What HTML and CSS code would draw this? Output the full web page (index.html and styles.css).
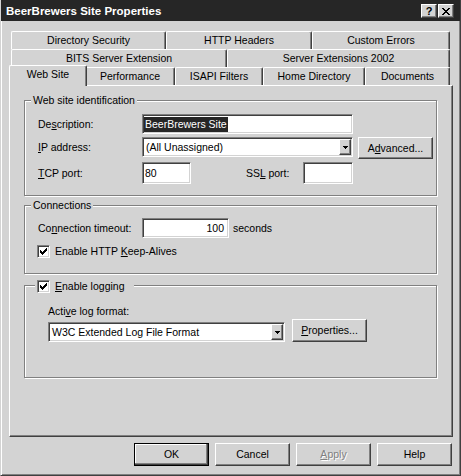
FILE: index.html
```html
<!DOCTYPE html>
<html>
<head>
<meta charset="utf-8">
<title>BeerBrewers Site Properties</title>
<link rel="stylesheet" href="styles.css">
</head>
<body>
<div class="window">
  <div class="titlebar">
    <span class="title">BeerBrewers Site Properties</span>
    <div class="capbtns">
      <span class="cbtn help">?</span>
      <span class="cbtn"><svg width="8" height="7" viewBox="0 0 8 7" shape-rendering="crispEdges"><path d="M0 0h2v1h-2z M6 0h2v1h-2z M1 1h2v1h-2z M5 1h2v1h-2z M2 2h4v1h-4z M3 3h2v1h-2z M2 4h4v1h-4z M1 5h2v1h-2z M5 5h2v1h-2z M0 6h2v1h-2z M6 6h2v1h-2z" fill="#000"/></svg></span>
    </div>
  </div>
  <div class="body">
    <div class="tabs">
      <div class="tabrow">
        <div class="tab w-ds">Directory Security</div>
        <div class="tab w-hh">HTTP Headers</div>
        <div class="tab w-ce">Custom Errors</div>
      </div>
      <div class="tabrow">
        <div class="tab w-bits">BITS Server Extension</div>
        <div class="tab w-se">Server Extensions 2002</div>
      </div>
      <div class="tabrow">
        <div class="tab sel w-ws">Web Site</div>
        <div class="tab w-pf">Performance</div>
        <div class="tab w-is">ISAPI Filters</div>
        <div class="tab w-hd">Home Directory</div>
        <div class="tab w-doc">Documents</div>
      </div>
    </div>
    <div class="page">
      <div class="group g1">
        <div class="gtitle">Web site identification</div>
        <div class="row r1">
          <span class="lbl">De<u>s</u>cription:</span>
          <div class="edit desc"><span class="hl">BeerBrewers Site</span></div>
        </div>
        <div class="row r2">
          <span class="lbl">
            <u>I</u>P address:</span>
          <div class="combo ipc">
            <span class="ctext">(All Unassigned)</span>
            <span class="arrow"><svg width="5" height="3" viewBox="0 0 5 3" shape-rendering="crispEdges"><path d="M0 0h5v1h-5z M1 1h3v1h-3z M2 2h1v1h-1z" fill="#000"/></svg></span>
          </div>
          <div class="btn adv">A<u>d</u>vanced...</div>
        </div>
        <div class="row r3">
          <span class="lbl"><u>T</u>CP port:</span>
          <div class="edit tcp">80</div>
          <span class="ssl">SS<u>L</u> port:</span>
          <div class="edit sslbox"></div>
        </div>
      </div>
      <div class="group g2">
        <div class="gtitle">Connections</div>
        <div class="row r4">
          <span class="lbl">Co<u>n</u>nection timeout:</span>
          <div class="edit num">100</div>
          <span class="sec">seconds</span>
        </div>
        <div class="row r5">
          <span class="chk"><svg width="7" height="7" viewBox="0 0 7 7" shape-rendering="crispEdges"><path d="M0 2h1v3h-1z M1 3h1v3h-1z M2 4h1v3h-1z M3 3h1v3h-1z M4 2h1v3h-1z M5 1h1v3h-1z M6 0h1v3h-1z" fill="#000"/></svg></span>
          <span class="chklbl">Enable HTTP <u>K</u>eep-Alives</span>
        </div>
      </div>
      <div class="group g3">
        <div class="gtitle">
          <span class="chk"><svg width="7" height="7" viewBox="0 0 7 7" shape-rendering="crispEdges"><path d="M0 2h1v3h-1z M1 3h1v3h-1z M2 4h1v3h-1z M3 3h1v3h-1z M4 2h1v3h-1z M5 1h1v3h-1z M6 0h1v3h-1z" fill="#000"/></svg></span>
          <span class="chklbl"><u>E</u>nable logging</span>
        </div>
        <div class="fmtlbl">Acti<u>v</u>e log format:</div>
        <div class="row r6">
          <div class="combo fmt">
            <span class="ctext">W3C Extended Log File Format</span>
            <span class="arrow"><svg width="5" height="3" viewBox="0 0 5 3" shape-rendering="crispEdges"><path d="M0 0h5v1h-5z M1 1h3v1h-3z M2 2h1v1h-1z" fill="#000"/></svg></span>
          </div>
          <div class="btn props"><u>P</u>roperties...</div>
        </div>
      </div>
    </div>
    <div class="btnrow">
      <div class="btn def">OK</div>
      <div class="btn">Cancel</div>
      <div class="btn dis"><u>A</u>pply</div>
      <div class="btn">Help</div>
    </div>
  </div>
</div>
</body>
</html>
```

FILE: styles.css
```css
* { box-sizing: border-box; }

body {
  margin: 0;
  background: #d3d3d3;
  font-family: "Liberation Sans", Arial, sans-serif;
  font-size: 10.5px;
  line-height: 13px;
  color: #000;
}

.window {
  width: 461px;
  height: 476px;
  background: #d3d3d3;
  border-left: 1px solid #d3d3d3;
  border-right: 1px solid #404040;
  border-bottom: 1px solid #404040;
  box-shadow: inset 1px 0 #fff, inset -1px -1px #808080;
  padding: 0 2px 2px 2px;
  overflow: hidden;
}

.titlebar {
  height: 21px;
  margin: 0 -2px;
  background: #262626;
  display: flex;
  align-items: center;
  justify-content: space-between;
  padding: 0 6px 0 5px;
}

.title {
  color: #fff;
  font-weight: bold;
  font-size: 11.5px;
  line-height: 14px;
  white-space: nowrap;
}

.capbtns {
  display: flex;
  gap: 1px;
  padding-top: 1px;
}

.cbtn {
  width: 16px;
  height: 14px;
  background: #d3d3d3;
  border: 1px solid;
  border-color: #fff #404040 #404040 #fff;
  box-shadow: inset -1px -1px #808080;
  display: flex;
  align-items: center;
  justify-content: center;
}

.cbtn.help {
  font-weight: bold;
  font-size: 11px;
  line-height: 11px;
}

.body {
  padding: 10px 5px 0 6px;
}

/* tabs */
.tabs {
  margin: 0 3px 0 2px;
}

.tabrow {
  display: flex;
  height: 18px;
}

.tab {
  height: 18px;
  flex: none;
  background: #d3d3d3;
  border-top: 1px solid #fff;
  border-left: 1px solid #fff;
  border-right: 1px solid #404040;
  box-shadow: inset -1px 0 #808080;
  border-radius: 2px 2px 0 0;
  text-align: center;
  padding-top: 2px;
  white-space: nowrap;
}

.tab.sel {
  height: 21px;
  margin: -2px -2px 0 -2px;
  position: relative;
  z-index: 1;
}

.w-ds { width: 155px; }
.w-hh { width: 146px; }
.w-ce { width: 138px; }
.w-bits { width: 216px; }
.w-se { width: 223px; }
.w-ws { width: 78px; }
.w-pf { width: 90px; }
.w-is { width: 88px; }
.w-hd { width: 102px; }
.w-doc { width: 85px; }

/* page */
.page {
  height: 352px;
  border: 1px solid;
  border-color: #fff #404040 #404040 #fff;
  box-shadow: inset -1px -1px #808080;
  padding: 14px 15px 0 14px;
}

.group {
  border: 1px solid #808080;
  box-shadow: inset 1px 1px #fff, 1px 1px #fff;
  padding: 0 0 0 13px;
}

.g1 { padding-bottom: 11px; }
.g2 { margin-top: 9px; padding-bottom: 15px; }
.g3 { margin-top: 11px; padding-bottom: 35px; }

.gtitle {
  display: flex;
  align-items: center;
  width: fit-content;
  height: 13px;
  margin: -7px 0 0 -7px;
  padding: 0 2px;
  background: #d3d3d3;
  white-space: nowrap;
}

.g3 .gtitle {
  margin: -6px 0 0 -3px;
  padding: 0 9px 0 2px;
}

.row {
  display: flex;
  align-items: center;
}

.lbl {
  width: 104px;
  flex: none;
  white-space: nowrap;
}

.r1 { margin-top: 7px; height: 20px; }
.r2 { margin-top: 3px; height: 22px; align-items: flex-start; }
.r2 .lbl { line-height: 20px; }
.r3 { margin-top: 3px; height: 22px; }
.r4 { margin-top: 6px; height: 20px; }
.r5 { margin-top: 7px; height: 13px; margin-left: -1px; }
.r6 { margin-top: 1px; height: 23px; margin-left: 10px; align-items: flex-end; }

.fmtlbl {
  margin-top: 12px;
  margin-left: 10px;
}

/* edit boxes */
.edit {
  background: #fff;
  border: 1px solid;
  border-color: #808080 #fff #fff #808080;
  box-shadow: inset 1px 1px #404040, inset -1px -1px #d3d3d3;
  padding: 0 2px 0 2px;
  display: flex;
  align-items: center;
  white-space: nowrap;
  overflow: hidden;
  flex: none;
}

.desc { width: 211px; height: 20px; padding: 0 1px; }
.hl {
  background: #262626;
  color: #fff;
  line-height: 15px;
  padding: 0 1px;
}

.tcp { width: 49px; height: 22px; }
.sslbox { width: 50px; height: 22px; }
.ssl { width: 57px; margin-left: 55px; flex: none; }
.num { width: 87px; height: 20px; justify-content: flex-end; padding-right: 4px; }
.sec { margin-left: 4px; }

/* combo */
.combo {
  background: #fff;
  border: 1px solid;
  border-color: #808080 #fff #fff #808080;
  box-shadow: inset 1px 1px #404040, inset -1px -1px #d3d3d3;
  padding: 1px;
  display: flex;
  flex: none;
  height: 20px;
}

.ipc { width: 211px; }
.fmt { width: 237px; }

.ctext {
  flex: 1;
  padding-left: 2px;
  line-height: 16px;
  white-space: nowrap;
  overflow: hidden;
}

.arrow {
  width: 12px;
  flex: none;
  background: #d3d3d3;
  border: 1px solid;
  border-color: #fff #404040 #404040 #fff;
  box-shadow: inset -1px -1px #808080;
  display: flex;
  align-items: center;
  justify-content: center;
  padding-top: 1px;
}

/* buttons */
.btn {
  width: 75px;
  height: 23px;
  flex: none;
  background: #d3d3d3;
  border: 1px solid;
  border-color: #fff #404040 #404040 #fff;
  box-shadow: inset -1px -1px #808080;
  display: flex;
  align-items: center;
  justify-content: center;
  white-space: nowrap;
}

.adv { height: 22px; margin-left: 5px; }
.props { margin-left: 7px; }

.btn.def {
  border: 1px solid #000;
  box-shadow: inset -1px -1px #404040, inset -2px -2px #808080, inset 1px 1px #fff;
}

.btn.dis {
  color: #808080;
  text-shadow: 1px 1px 0 #fff;
}

.btnrow {
  display: flex;
  justify-content: flex-end;
  gap: 6px;
  margin-top: 6px;
  padding-right: 1px;
}

/* checkbox */
.chk {
  width: 13px;
  height: 13px;
  flex: none;
  background: #fff;
  border: 1px solid;
  border-color: #808080 #fff #fff #808080;
  box-shadow: inset 1px 1px #404040, inset -1px -1px #d3d3d3;
  display: flex;
  align-items: center;
  justify-content: center;
}

.chklbl {
  margin-left: 5px;
  white-space: nowrap;
}
```
